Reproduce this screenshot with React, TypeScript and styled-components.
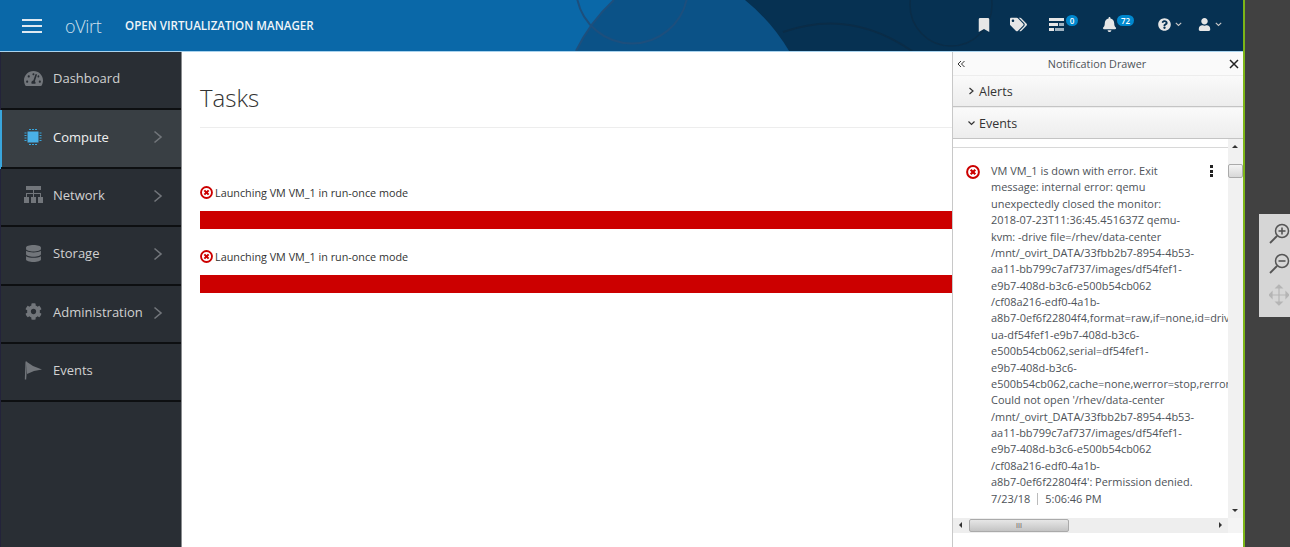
import React from "react";
import styled, { createGlobalStyle } from "styled-components";
import { FaBookmark, FaTags, FaBell, FaQuestionCircle, FaUser, FaDatabase, FaCog, FaTachometerAlt } from "react-icons/fa";

const Global = createGlobalStyle`
  html, body { margin: 0; padding: 0; height: 547px; overflow: hidden; background: #414141; }
  body { font-family: "Open Sans", "Liberation Sans", sans-serif; }
`;
const Desktop = styled.div`position: relative; width: 1290px; height: 547px; overflow: hidden; background: #414141; display: flex;`;
const Frame = styled.div`position: relative; width: 1245px; height: 547px; box-sizing: border-box; border-right: 2px solid #7cb518; display: flex; flex-direction: column; background: #fff; overflow: hidden;`;
const Header = styled.header`position: relative; height: 52px; flex: none; box-sizing: border-box; border-bottom: 1px solid #a9d3ee; background: #0a68a8; display: flex; align-items: center; overflow: hidden; color: #fff;`;
const Art = styled.svg`position: absolute; left: 0; top: 0; width: 1243px; height: 51px;`;
const Burger = styled.div`position: relative; margin-left: 22px; width: 20px; height: 14px; display: flex; flex-direction: column; justify-content: space-between; span { height: 2px; background: #dfe9f1; display: block; }`;
const Logo = styled.div`position: relative; margin-left: 23px; width: 60px; font: 300 18px "Open Sans", sans-serif; color: #cfe0ee; letter-spacing: -0.3px;`;
const Product = styled.div`position: relative; font: 600 11.6px "Open Sans", sans-serif; color: #f0f5f9; white-space: nowrap;`;
const Tools = styled.div`position: absolute; top: 0; left: 977px; height: 49px; display: flex; align-items: center; color: #e6e6e6;`;
const Tool = styled.div<{ $w: number }>`position: relative; width: ${p => p.$w}px; height: 20px; display: flex; align-items: center; gap: 4px; svg { flex: none; }`;
const Badge = styled.span<{ $w: number; $l: number }>`position: absolute; left: ${p => p.$l}px; top: 0; width: ${p => p.$w}px; height: 11px; line-height: 11px; border-radius: 6px; background: #0088ce; color: #fff; font-size: 8px; font-weight: 600; text-align: center;`;
const Body = styled.div`flex: 1; display: flex; min-height: 0;`;
const Side = styled.nav`width: 182px; flex: none; box-sizing: border-box; background: #292e34; border-left: 1px solid #23233a; border-right: 1px solid #8a8c8f;`;
const Item = styled.div<{ $active?: boolean }>`height: 58.4px; box-sizing: border-box; border-bottom: 2px solid #0d0f11; display: flex; align-items: center; position: relative; padding: 0 0 4px 22px; background: ${p => p.$active ? "#393f44" : "transparent"}; box-shadow: ${p => p.$active ? "-1px 0 0 #39a5dc, inset 1px 0 0 #39a5dc" : "none"}; color: ${p => p.$active ? "#f0f0f0" : "#d1d1d1"}; font-size: 13px;`;
const NavIcon = styled.span`width: 20px; height: 20px; display: flex; align-items: center; justify-content: center; margin-right: 10px; color: #72767b; flex: none;`;
const Chevron = styled.svg`position: absolute; left: 152px; top: 20px;`;
const Main = styled.main`flex: 1; padding: 0 0 0 18px; min-width: 0;`;
const Title = styled.h1`margin: 0; padding-top: 28px; height: 47px; font: 300 24px/36px "Open Sans", sans-serif; color: #333; border-bottom: 1px solid #ededed; width: 752px; box-sizing: content-box;`;
const Tasks = styled.div`padding-top: 57px; width: 753px; display: flex; flex-direction: column;`;
const TaskLabel = styled.div`height: 16px; box-sizing: border-box; padding-bottom: 1px; display: flex; align-items: center; gap: 2px; font-size: 10.8px; color: #333; white-space: nowrap;`;
const Bar = styled.div`height: 18px; margin: 10px 0 20px; background: #cc0000;`;
const Drawer = styled.aside`position: absolute; left: 952px; top: 52px; bottom: 0; width: 291px; box-sizing: border-box; border-left: 1px solid #c8c8c8; background: #fff; display: flex; flex-direction: column;`;
const DrawerHead = styled.div`height: 23px; flex: none; box-sizing: content-box; display: flex; align-items: center; justify-content: space-between; padding: 0 4px; background: #fafafa; font-size: 10.8px; color: #4d5258;`;
const Section = styled.div`height: 32px; flex: none; box-sizing: border-box; border-top: 1px solid transparent; border-bottom: 1px solid #c4c4c4; background: linear-gradient(#fafafa, #ededed); display: flex; align-items: center; gap: 4px; padding: 0 0 0 15px; font-size: 12.5px; color: #333; &:first-of-type { border-top: 1px solid #bbb; }`;
const Scroller = styled.div`display: grid; grid-template-columns: 1fr 15px; grid-template-rows: 379px 15px; flex: none;`;
const Content = styled.div`overflow: hidden; position: relative; padding: 8px 0 0 0;`;
const Rule = styled.div`height: 1px; background: #d8d8d8; margin-bottom: 17px;`;
const Note = styled.div`display: flex; padding-left: 13px; gap: 11px; position: relative;`;
const Msg = styled.div`font-size: 10.95px; line-height: 16.37px; color: #4d5258; white-space: nowrap; position: relative; top: -2px;`;
const Stamp = styled.span`display: flex; align-items: center; gap: 7px; i { display: block; width: 1px; height: 12px; background: #bbb; }`;
const Kebab = styled.div`position: absolute; left: 257px; top: 0; display: flex; flex-direction: column; gap: 1.5px; span { width: 3px; height: 3px; background: #222; display: block; }`;
const VBar = styled.div`background: #f1f1f1; position: relative; display: flex; flex-direction: column; align-items: center;`;
const HBar = styled.div`background: #eeeeee; display: flex; align-items: center; position: relative;`;
const Corner = styled.div`background: #f4f4f4;`;
const Thumb = styled.div`position: absolute; left: 0; top: 25px; width: 15px; height: 14px; box-sizing: border-box; border: 1px solid #aaa; border-radius: 2px; background: linear-gradient(#f4f4f4, #d8d8d8);`;
const HThumb = styled.div`position: absolute; left: 16px; top: 1px; width: 100px; height: 13px; box-sizing: border-box; border: 1px solid #aaa; border-radius: 2px; background: linear-gradient(#e6e6e6, #c4c4c4); font-size: 7px; line-height: 11px; text-align: center; color: #555;`;
const Arrow = styled.span<{ $dir: string; $pos: string }>`position: absolute; ${p => p.$pos}; width: 0; height: 0; border: 3px solid transparent; ${p => `border-${p.$dir}-color: #333;`}`;
const Zoomer = styled.div`position: absolute; left: 1259px; top: 214px; width: 31px; height: 103px; background: #d6d6d6; display: flex; flex-direction: column; align-items: center; padding: 8px 0 0 9px; box-sizing: border-box; gap: 6px;`;
const MoveIcon = styled.svg`margin-top: 2px;`;

const ErrorIcon = ({ size = 13 }: { size?: number }) => (
  <svg width={size} height={size} viewBox="0 0 14 14" style={{ flex: "none" }}>
    <circle cx="7" cy="7" r="5.9" fill="#fff" stroke="#cc0000" strokeWidth="2" />
    <path d="M4.7 4.7 9.3 9.3M9.3 4.7 4.7 9.3" stroke="#cc0000" strokeWidth="2.2" />
  </svg>
);
const Chev = () => (
  <Chevron width="10" height="14" viewBox="0 0 10 14"><path d="M1.500 1.500 8 7 1.500 12.500" fill="none" stroke="#72767b" strokeWidth="1.6" /></Chevron>
);
const Lens = ({ plus, minus }: { plus?: boolean; minus?: boolean }) => (
  <svg width="22" height="24" viewBox="0 0 22 24">
    <circle cx="14" cy="9" r="6.5" fill="none" stroke="#555" strokeWidth="1.5" />
    <path d="M9 14 2 21" stroke="#555" strokeWidth="1.8" />
    {(plus || minus) && <path d="M10.5 9h7" stroke="#555" strokeWidth="1.6" />}
    {plus && <path d="M14 5.5v7" stroke="#555" strokeWidth="1.6" />}
  </svg>
);
const ChipIcon = () => (
  <svg width="18" height="18" viewBox="0 0 18 18">
    <rect x="3.500" y="3.500" width="11" height="11" fill="#4ab0e6" />
    <path d="M5 1.500h8M5 16.500h8M.5 5h2M.5 7.500h2M.5 10h2M.5 12.500h2M15.500 5h2M15.500 7.500h2M15.500 10h2M15.500 12.500h2" stroke="#39a5dc" strokeWidth="1.2" strokeDasharray="2 1" />
  </svg>
);
const NetIcon = () => (
  <svg width="19" height="17" viewBox="0 0 19 17" fill="#72767b">
    <rect x="2" y="0" width="15" height="4" /><rect x="0" y="11" width="5" height="6" /><rect x="7" y="11" width="5" height="6" /><rect x="14" y="11" width="5" height="6" />
    <path d="M9 4h1v3h7v4h-1V8h-6v3H9V8H3v3H2V7h7z" />
  </svg>
);
const FlagIcon = () => (
  <svg width="19" height="19" viewBox="0 0 19 19" fill="#72767b">
    <path d="M1.500 .5h1.600L2.200 18.500H.8z" /><path d="M3 1 9 5l9 3.500-8 1.500-7 3z" />
  </svg>
);
const ListIcon = () => (
  <svg width="15" height="13" viewBox="0 0 15 13" fill="#e6e6e6" style={{ display: "block" }}>
    <rect width="15" height="3" /><rect y="5" width="9" height="3" /><rect x="10" y="5" width="5" height="3" fill="#9fb2c0" /><rect y="10" width="5" height="3" /><rect x="6" y="10" width="9" height="3" fill="#9fb2c0" />
  </svg>
);
const Caret = () => (
  <svg width="7" height="5" viewBox="0 0 7 5"><path d="M.8.8 3.500 3.500 6.200.8" fill="none" stroke="#c8c8c8" strokeWidth="1.1" /></svg>
);
const lines = [
  "VM VM_1 is down with error. Exit", "message: internal error: qemu", "unexpectedly closed the monitor:",
  "2018-07-23T11:36:45.451637Z qemu-", "kvm: -drive file=/rhev/data-center", "/mnt/_ovirt_DATA/33fbb2b7-8954-4b53-",
  "aa11-bb799c7af737/images/df54fef1-", "e9b7-408d-b3c6-e500b54cb062", "/cf08a216-edf0-4a1b-",
  "a8b7-0ef6f22804f4,format=raw,if=none,id=drive-", "ua-df54fef1-e9b7-408d-b3c6-", "e500b54cb062,serial=df54fef1-",
  "e9b7-408d-b3c6-", "e500b54cb062,cache=none,werror=stop,rerror=stop", "Could not open '/rhev/data-center",
  "/mnt/_ovirt_DATA/33fbb2b7-8954-4b53-", "aa11-bb799c7af737/images/df54fef1-", "e9b7-408d-b3c6-e500b54cb062",
  "/cf08a216-edf0-4a1b-", "a8b7-0ef6f22804f4': Permission denied.",
];
const nav = [
  { label: "Dashboard", icon: <FaTachometerAlt size={19} /> },
  { label: "Compute", icon: <ChipIcon />, active: true, more: true },
  { label: "Network", icon: <NetIcon />, more: true },
  { label: "Storage", icon: <FaDatabase size={17} />, more: true },
  { label: "Administration", icon: <FaCog size={17} />, more: true },
  { label: "Events", icon: <FlagIcon /> },
];

export default function App() {
  return (
    <Desktop>
      <Global />
      <Frame>
        <Header>
          <Art viewBox="0 0 1243 51" preserveAspectRatio="none">
            <path d="M614 0H760L789 51H576Q590 22 614 0Z" fill="#0b5287" />
            <path d="M745 0H1243V51H789Q772 22 745 0Z" fill="#063152" />
            <path d="M577 0A56 56 0 0 0 687 0" fill="none" stroke="#1d4f7d" strokeWidth="2" transform="translate(0 -2)" />
            <path d="M576 51Q590 22 614 0" fill="none" stroke="#1d4f7d" strokeWidth="2" />
            <path d="M783 32Q850 8 912 51" fill="none" stroke="#0a2c47" strokeWidth="2" />
            <circle cx="951" cy="5" r="41" fill="none" stroke="#0a2c47" strokeWidth="1.500" />
          </Art>
          <Burger><span /><span /><span /></Burger>
          <Logo>oVirt</Logo>
          <Product>OPEN VIRTUALIZATION MANAGER</Product>
          <Tools>
            <Tool $w={33}><FaBookmark size={14} /></Tool>
            <Tool $w={39}><FaTags size={17} /></Tool>
            <Tool $w={53}><ListIcon /><Badge $w={12} $l={17}>0</Badge></Tool>
            <Tool $w={56}><FaBell size={15} /><Badge $w={17} $l={15}>72</Badge></Tool>
            <Tool $w={40}><FaQuestionCircle size={13} /><Caret /></Tool>
            <Tool $w={30}><FaUser size={13} /><Caret /></Tool>
          </Tools>
        </Header>
        <Body>
          <Side>
            {nav.map(n => (
              <Item key={n.label} $active={n.active}>
                <NavIcon>{n.icon}</NavIcon>
                {n.label}
                {n.more && <Chev />}
              </Item>
            ))}
          </Side>
          <Main>
            <Title>Tasks</Title>
            <Tasks>
              {[0, 1].map(i => (
                <div key={i}>
                  <TaskLabel><ErrorIcon />Launching VM VM_1 in run-once mode</TaskLabel>
                  <Bar />
                </div>
              ))}
            </Tasks>
          </Main>
        </Body>
        <Drawer>
          <DrawerHead>
            <svg width="8" height="8" viewBox="0 0 8 8"><path d="M4 1 1 4l3 3M7.500 1 4.500 4l3 3" fill="none" stroke="#333" strokeWidth="1" /></svg>
            <span>Notification Drawer</span>
            <svg width="10" height="10" viewBox="0 0 10 10"><path d="M1 1 9 9M9 1 1 9" stroke="#222" strokeWidth="1.500" /></svg>
          </DrawerHead>
          <Section>
            <svg width="7" height="8" viewBox="0 0 7 8"><path d="M1.500 1 5 4 1.500 7" fill="none" stroke="#333" strokeWidth="1.200" /></svg>
            Alerts
          </Section>
          <Section>
            <svg width="7" height="8" viewBox="0 0 7 8"><path d="M.5 2.500 3.500 5.500 6.500 2.500" fill="none" stroke="#333" strokeWidth="1.200" /></svg>
            Events
          </Section>
          <Scroller>
            <Content>
              <Rule />
              <Note>
                <ErrorIcon size={14} />
                <Msg>
                  {lines.map((l, i) => <div key={i}>{l}</div>)}
                  <Stamp>7/23/18 <i /> 5:06:46 PM</Stamp>
                </Msg>
                <Kebab><span /><span /><span /></Kebab>
              </Note>
            </Content>
            <VBar>
              <Arrow $dir="bottom" $pos="left: 4px; top: 3px" />
              <Thumb />
              <Arrow $dir="top" $pos="left: 4px; bottom: 3px" />
            </VBar>
            <HBar>
              <Arrow $dir="right" $pos="left: 3px; top: 4px" />
              <HThumb>III</HThumb>
              <Arrow $dir="left" $pos="right: 3px; top: 4px" />
            </HBar>
            <Corner />
          </Scroller>
        </Drawer>
      </Frame>
      <Zoomer>
        <Lens plus />
        <Lens minus />
        <MoveIcon width="20" height="22" viewBox="0 0 20 22"><path d="M10 1v20M0 11h20M10 1 7 4h6zM10 21l-3-3h6zM0 11l3-3v6zM20 11l-3-3v6z" fill="#b5b5b5" stroke="#b5b5b5" strokeWidth="1.200" /></MoveIcon>
      </Zoomer>
    </Desktop>
  );
}
